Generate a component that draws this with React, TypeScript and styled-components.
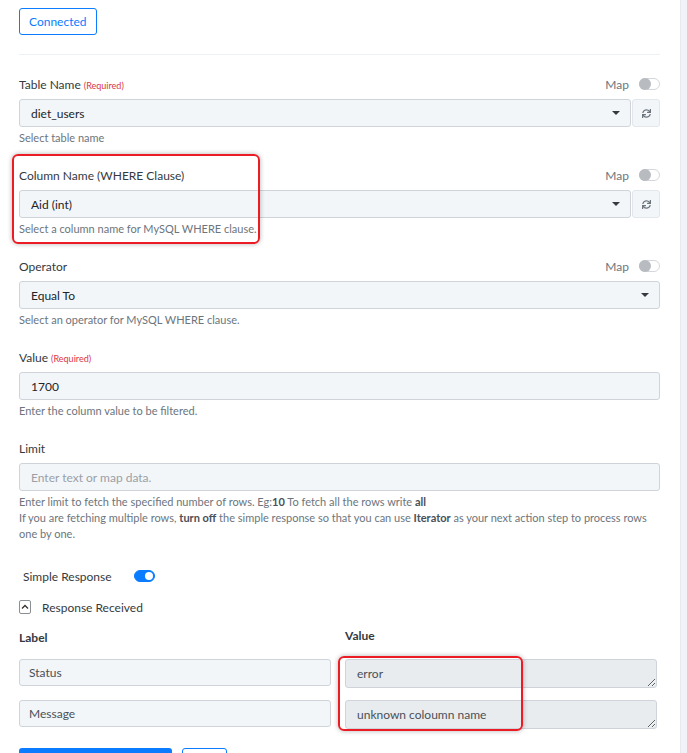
import styled, { createGlobalStyle } from 'styled-components'
import { FaSync } from 'react-icons/fa'

const GlobalStyle = createGlobalStyle`
  html, body {
    margin: 0;
    padding: 0;
    height: 100%;
    overflow: hidden;
    background: #f0f2f7;
  }
  body {
    font-family: Lato, "Open Sans", Arial, sans-serif;
    color: #343a40;
  }
`

const Field = ({ label, required, map, help, children }: any) => (
  <Group>
    <LabelRow>
      <Label>
        {label}
        {required && <Required>(Required)</Required>}
      </Label>
      {map && (
        <MapToggle>
          Map <Switch $on={false} />
        </MapToggle>
      )}
    </LabelRow>
    {children}
    {help && <Help>{help}</Help>}
  </Group>
)

const SelectBox = ({ value, refresh }: { value: string; refresh?: boolean }) => (
  <InputRow>
    <Select>
      <span>{value}</span>
      <Caret />
    </Select>
    {refresh && (
      <RefreshButton>
        <FaSync size={9} />
      </RefreshButton>
    )}
  </InputRow>
)

const App = () => {
  return (
    <Page>
      <GlobalStyle />
      <Panel>
        <ConnectedButton>Connected</ConnectedButton>
        <Divider />

        <Field label="Table Name" required map help="Select table name">
          <SelectBox value="diet_users" refresh />
        </Field>

        <Marked>
          <Field
            label="Column Name (WHERE Clause)"
            map
            help="Select a column name for MySQL WHERE clause."
          >
            <SelectBox value="Aid (int)" refresh />
          </Field>
          <Highlight $w={248} $h={90} $top={-11} />
        </Marked>

        <Field label="Operator" map help="Select an operator for MySQL WHERE clause.">
          <SelectBox value="Equal To" />
        </Field>

        <Field label="Value" required help="Enter the column value to be filtered.">
          <TextInput defaultValue="1700" />
        </Field>

        <Field label="Limit">
          <TextInput placeholder="Enter text or map data." />
          <Help>
            <p>
              Enter limit to fetch the specified number of rows. Eg:<b>10</b> To fetch
              all the rows write <b>all</b>
            </p>
            <p>
              If you are fetching multiple rows, <b>turn off</b> the simple response so
              that you can use <b>Iterator</b> as your next action step to process rows
            </p>
            <p>one by one.</p>
          </Help>
        </Field>

        <SimpleRow>
          Simple Response <Switch $on />
        </SimpleRow>

        <CollapseRow>
          <CollapseBox>
            <svg width="8" height="6" viewBox="0 0 8 6">
              <path d="M1 4.5 L4 1.5 L7 4.5" fill="none" stroke="#333" strokeWidth="1.3" />
            </svg>
          </CollapseBox>
          Response Received
        </CollapseRow>

        <ResponseGrid>
          <Column>
            <Heading>Label</Heading>
            <Cell readOnly value="Status" />
            <Cell readOnly value="Message" />
          </Column>
          <Column>
            <Heading $lift>Value</Heading>
            <Marked>
              <ValueCell readOnly value="error" />
              <ValueCell readOnly value="unknown coloumn name" />
              <Highlight $w={185} $h={75} $top={-3} />
            </Marked>
          </Column>
        </ResponseGrid>

        <Actions>
          <PrimaryButton>Save &amp; Send Test Request</PrimaryButton>
          <OutlineButton>Save</OutlineButton>
        </Actions>
      </Panel>
      <Rail />
    </Page>
  )
}

const Page = styled.div`
  display: flex;
  align-items: flex-start;
  height: 753px;
  overflow: hidden;
`
const Panel = styled.div`
  flex: 0 0 680px;
  min-height: 100%;
  box-sizing: border-box;
  padding: 8px 20px 0 19px;
  background: #fff;
`
const Rail = styled.div`
  flex: 1;
  align-self: stretch;
  background: #f0f2f7;
  border-left: 1px solid #e6e9f0;
`
const ConnectedButton = styled.button`
  display: block;
  height: 27px;
  padding: 0 9px;
  font: 12px Lato, Arial, sans-serif;
  color: #0b7bff;
  background: #fff;
  border: 1px solid #0b7bff;
  border-radius: 3px;
`
const Divider = styled.hr`
  border: none;
  border-top: 1px solid #edf1f5;
  margin: 19px 0 19px;
`
const Group = styled.div`
  margin-bottom: 19px;
`
const Marked = styled.div`
  position: relative;
`
const Highlight = styled.div<{ $w: number; $h: number; $top: number }>`
  position: absolute;
  left: -7px;
  top: ${p => p.$top}px;
  width: ${p => p.$w}px;
  height: ${p => p.$h}px;
  box-sizing: border-box;
  border: 2px solid #ec1c24;
  border-radius: 6px;
  box-shadow: 0 0 5px rgba(0, 0, 0, 0.3);
  pointer-events: none;
`
const LabelRow = styled.div`
  display: flex;
  align-items: center;
  justify-content: space-between;
  height: 20px;
  margin-bottom: 5px;
`
const Label = styled.label`
  font-size: 12px;
  color: #343a40;
`
const Required = styled.span`
  font-size: 9px;
  color: #dc3545;
  margin-left: 3px;
`
const MapToggle = styled.div`
  display: flex;
  align-items: center;
  gap: 10px;
  font-size: 12px;
  color: #6c757d;
`
const Switch = styled.span<{ $on: boolean }>`
  position: relative;
  display: inline-block;
  width: 21px;
  height: 12px;
  box-sizing: border-box;
  border-radius: 6px;
  border: 1px solid ${p => (p.$on ? '#0b7bff' : '#d3d7db')};
  background: ${p => (p.$on ? '#0b7bff' : '#fff')};

  &::after {
    content: '';
    position: absolute;
    top: ${p => (p.$on ? '1px' : '-1px')};
    left: ${p => (p.$on ? '10px' : '-1px')};
    width: ${p => (p.$on ? '8px' : '12px')};
    height: ${p => (p.$on ? '8px' : '12px')};
    border-radius: 50%;
    background: ${p => (p.$on ? '#fff' : '#b8bcc1')};
  }
`
const InputRow = styled.div`
  display: flex;
`
const Select = styled.div`
  flex: 1;
  display: flex;
  align-items: center;
  justify-content: space-between;
  height: 28px;
  box-sizing: border-box;
  padding: 0 10px 0 11px;
  background: #f3f6f9;
  border: 1px solid #ced4da;
  border-radius: 3px;
  font-size: 12px;
  color: #212529;
`
const Caret = styled.span`
  width: 0;
  height: 0;
  border-left: 4px solid transparent;
  border-right: 4px solid transparent;
  border-top: 4px solid #343a40;
`
const RefreshButton = styled.div`
  width: 28px;
  height: 28px;
  box-sizing: border-box;
  display: flex;
  align-items: center;
  justify-content: center;
  margin-left: 1px;
  background: #f3f6f9;
  border: 1px solid #e3e7eb;
  border-radius: 3px;
  color: #6c757d;
`
const TextInput = styled.input`
  display: block;
  width: 100%;
  height: 28px;
  box-sizing: border-box;
  padding: 0 11px;
  background: #f3f6f9;
  border: 1px solid #ced4da;
  border-radius: 3px;
  font: 12px Lato, Arial, sans-serif;
  color: #212529;
  outline: none;

  &::placeholder {
    color: #9aa0a6;
  }
`
const Help = styled.div`
  margin-top: 3px;
  font-size: 11px;
  line-height: 16px;
  color: #6c757d;

  p {
    margin: 0;
    white-space: nowrap;
  }

  b {
    color: #495057;
  }
`
const SimpleRow = styled.div`
  display: flex;
  align-items: center;
  gap: 22px;
  height: 20px;
  margin: 24px 0 0 4px;
  font-size: 12px;
  color: #343a40;
`
const CollapseRow = styled.div`
  display: flex;
  align-items: center;
  gap: 11px;
  height: 20px;
  margin-top: 11px;
  font-size: 12px;
  color: #343a40;
`
const CollapseBox = styled.span`
  width: 12px;
  height: 14px;
  box-sizing: border-box;
  display: flex;
  align-items: center;
  justify-content: center;
  border: 1px solid #8a8f94;
  border-radius: 2px;
`
const ResponseGrid = styled.div`
  display: grid;
  grid-template-columns: 1fr 1fr;
  column-gap: 14px;
  margin: 11px 3px 0 0;
`
const Column = styled.div`
  display: flex;
  flex-direction: column;
`
const Heading = styled.div<{ $lift?: boolean }>`
  height: 20px;
  line-height: 20px;
  font-size: 12px;
  font-weight: 700;
  color: #343a40;
  margin-top: ${p => (p.$lift ? '-2px' : '0')};
  margin-bottom: ${p => (p.$lift ? '13px' : '11px')};
`
const Cell = styled.input`
  display: block;
  width: 100%;
  height: 27px;
  box-sizing: border-box;
  margin-bottom: 14px;
  padding: 0 9px;
  background: #f3f6f9;
  border: 1px solid #ced4da;
  border-radius: 3px;
  font: 12px Lato, Arial, sans-serif;
  color: #495057;
  outline: none;
`
const ValueCell = styled.textarea`
  display: block;
  width: 100%;
  height: 29px;
  box-sizing: border-box;
  margin: 0 0 12px;
  padding: 6px 11px;
  background: #e9ecef;
  border: 1px solid #ced4da;
  border-radius: 3px;
  font: 12px Lato, Arial, sans-serif;
  line-height: 15px;
  color: #495057;
  resize: vertical;
  overflow: hidden;
  outline: none;
`
const Actions = styled.div`
  display: flex;
  gap: 10px;
  margin-top: 7px;
`
const PrimaryButton = styled.button`
  width: 153px;
  height: 30px;
  border: none;
  border-radius: 3px;
  background: #0b7bff;
  color: #fff;
  font: 12px Lato, Arial, sans-serif;
`
const OutlineButton = styled.button`
  width: 45px;
  height: 30px;
  border: 1px solid #0b7bff;
  border-radius: 3px;
  background: #fff;
  color: #0b7bff;
  font: 12px Lato, Arial, sans-serif;
`

export default App
